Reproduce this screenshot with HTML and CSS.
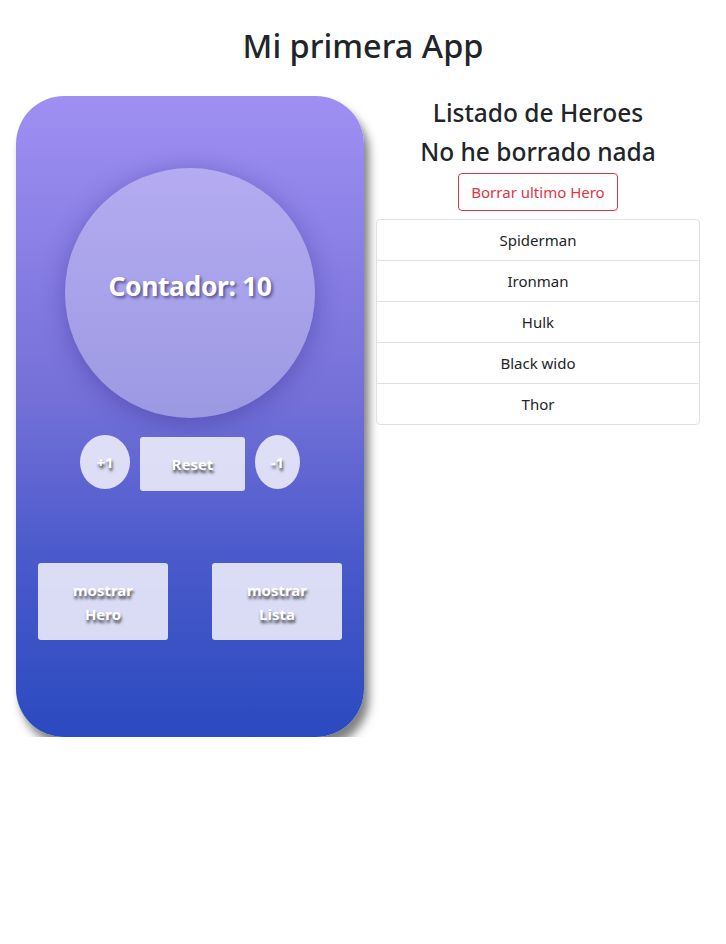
FILE: index.html
```html
<!DOCTYPE html>
<html lang="es">
<head>
<meta charset="utf-8">
<title>Mi primera App</title>
<link rel="stylesheet" href="styles.css">
</head>
<body>
<h1 class="title">Mi primera App</h1>
<div class="layout">
  <div class="phone">
    <div class="counter">
      <span class="counter-text">Contador: 10</span>
    </div>
    <div class="controls">
      <button class="btn-round btn-plus">+1</button>
      <button class="btn-reset">Reset</button>
      <button class="btn-round btn-minus">-1</button>
    </div>
    <div class="show-row">
      <button class="btn-show">mostrar<br>Hero</button>
      <button class="btn-show">mostrar<br>Lista</button>
    </div>
  </div>
  <div class="heroes">
    <h2 class="heading">Listado de Heroes</h2>
    <h2 class="heading heading-second">No he borrado nada</h2>
    <button class="btn-danger-outline">Borrar ultimo Hero</button>
    <ul class="list">
      <li class="list-item">Spiderman</li>
      <li class="list-item">Ironman</li>
      <li class="list-item">Hulk</li>
      <li class="list-item">Black wido</li>
      <li class="list-item">Thor</li>
    </ul>
  </div>
</div>
</body>
</html>
```
FILE: styles.css
```css
* { box-sizing: border-box; }
body {
  margin: 0;
  font-family: "Noto Sans", "Open Sans", sans-serif;
  color: #212529;
  background: #fff;
}
.title {
  margin: 26px 0 30px;
  font-size: 32.5px;
  font-weight: 500;
  line-height: 40px;
  text-align: center;
}
.layout {
  display: grid;
  grid-template-columns: 348px 324px;
  column-gap: 12px;
  padding-left: 16px;
  align-items: start;
}
.phone {
  height: 641px;
  border-radius: 48px;
  background: linear-gradient(to bottom, #9f8ff3 0%, #7470d8 47%, #4a5acb 72%, #2a4abf 100%);
  box-shadow: 5px 9px 10px rgba(0,0,0,0.5);
  padding-top: 72px;
  display: flex;
  flex-direction: column;
  align-items: center;
}
.counter {
  width: 250px;
  height: 250px;
  border-radius: 50%;
  background: rgba(255,255,255,0.3);
  box-shadow: 0 4px 24px rgba(40,30,120,0.35);
  display: flex;
  align-items: center;
  justify-content: center;
  padding-bottom: 15px;
}
.counter-text {
  color: #fff;
  font-weight: 700;
  font-size: 26.5px;
  letter-spacing: -0.4px;
  text-shadow: 2px 2px 3px rgba(40,30,90,0.6);
}
.controls {
  margin-top: 17px;
  display: flex;
  gap: 10px;
  align-items: flex-start;
}
button {
  font-family: inherit;
  border: none;
  color: #fff;
  font-weight: 700;
  font-size: 15px;
  text-shadow: 1px 3px 3px rgba(0,0,0,0.7);
  background: rgba(235,235,250,0.9);
  cursor: pointer;
  padding: 0;
}
.btn-round {
  height: 54px;
  border-radius: 50%;
}
.btn-plus { width: 50px; }
.btn-minus { width: 45px; }
.btn-reset {
  width: 105px;
  height: 54px;
  margin-top: 2px;
  border-radius: 3px;
}
.show-row {
  margin-top: 72px;
  display: flex;
  gap: 44px;
}
.btn-show {
  width: 130px;
  height: 77px;
  border-radius: 3px;
  font-size: 15px;
  line-height: 24px;
}
.heroes {
  display: flex;
  flex-direction: column;
  align-items: center;
}
.heading {
  margin: 0;
  font-size: 24.5px;
  font-weight: 500;
  line-height: 33px;
  text-align: center;
}
.heading-second { margin-top: 6px; }
.btn-danger-outline {
  margin-top: 5px;
  height: 38px;
  padding: 0 12px;
  border: 1px solid #dc3545;
  border-radius: 4px;
  background: #fff;
  color: #dc3545;
  font-weight: 400;
  font-size: 15px;
  text-shadow: none;
}
.list {
  margin: 8px 0 0;
  padding: 0;
  list-style: none;
  width: 100%;
  border: 1px solid #dee2e6;
  border-radius: 4px;
}
.list-item {
  height: 41px;
  line-height: 40px;
  text-align: center;
  font-size: 15px;
  color: #212529;
  border-top: 1px solid #dee2e6;
}
.list-item:first-child { border-top: none; height: 40px; }
```
